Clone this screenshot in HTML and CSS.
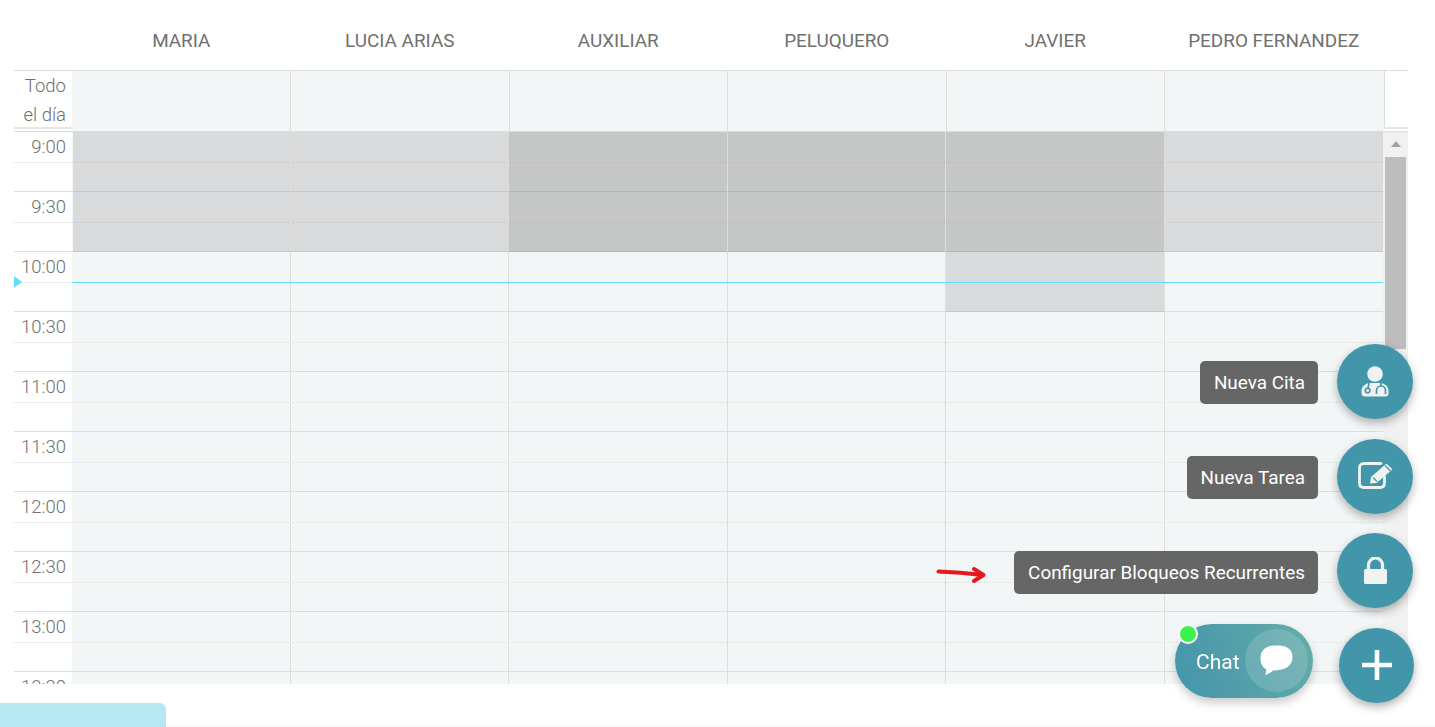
FILE: index.html
```html
<!DOCTYPE html>
<html lang="es">
<head>
<meta charset="utf-8">
<title>Agenda</title>
<link rel="stylesheet" href="styles.css">
</head>
<body>
<main class="calendar">
  <div class="head">
    <div class="axis-gap"></div>
    <div class="res">MARIA</div>
    <div class="res">LUCIA ARIAS</div>
    <div class="res">AUXILIAR</div>
    <div class="res">PELUQUERO</div>
    <div class="res">JAVIER</div>
    <div class="res">PEDRO FERNANDEZ</div>
  </div>
  <div class="allday">
    <div class="allday-axis">Todo<br>el día</div>
    <div class="allday-cell"></div>
    <div class="allday-cell"></div>
    <div class="allday-cell"></div>
    <div class="allday-cell"></div>
    <div class="allday-cell"></div>
    <div class="allday-cell allday-last"></div>
    <div class="allday-gutter"></div>
  </div>
  <div class="body">
    <div class="grid">
      <div class="slot major"><span class="time">9:00</span><span class="track"></span></div>
      <div class="slot minor"><span class="time"></span><span class="track"></span></div>
      <div class="slot major"><span class="time">9:30</span><span class="track"></span></div>
      <div class="slot minor"><span class="time"></span><span class="track"></span></div>
      <div class="slot major"><span class="time">10:00</span><span class="track"></span></div>
      <div class="slot minor"><span class="time"></span><span class="track"></span></div>
      <div class="slot major"><span class="time">10:30</span><span class="track"></span></div>
      <div class="slot minor"><span class="time"></span><span class="track"></span></div>
      <div class="slot major"><span class="time">11:00</span><span class="track"></span></div>
      <div class="slot minor"><span class="time"></span><span class="track"></span></div>
      <div class="slot major"><span class="time">11:30</span><span class="track"></span></div>
      <div class="slot minor"><span class="time"></span><span class="track"></span></div>
      <div class="slot major"><span class="time">12:00</span><span class="track"></span></div>
      <div class="slot minor"><span class="time"></span><span class="track"></span></div>
      <div class="slot major"><span class="time">12:30</span><span class="track"></span></div>
      <div class="slot minor"><span class="time"></span><span class="track"></span></div>
      <div class="slot major"><span class="time">13:00</span><span class="track"></span></div>
      <div class="slot minor"><span class="time"></span><span class="track"></span></div>
      <div class="slot major"><span class="time">13:30</span><span class="track"></span></div>
      <div class="lanes">
        <div class="lane"><div class="shade shade-light shade-morning"></div></div>
        <div class="lane"><div class="shade shade-light shade-morning"></div></div>
        <div class="lane"><div class="shade shade-dark shade-morning"></div></div>
        <div class="lane"><div class="shade shade-dark shade-morning"></div></div>
        <div class="lane"><div class="shade shade-dark shade-morning"></div><div class="shade shade-light shade-after"></div></div>
        <div class="lane"><div class="shade shade-light shade-morning"></div></div>
      </div>
      <div class="now-line"></div>
      <div class="now-mark"></div>
    </div>
    <div class="scrollbar">
      <div class="scroll-up"></div>
      <div class="scroll-thumb"></div>
    </div>
  </div>
</main>

<footer class="foot">
  <div class="foot-tab"></div>
  <div class="foot-strip"></div>
</footer>

<svg class="arrow" width="52" height="18" viewBox="0 0 52 18" aria-hidden="true">
  <path d="M2.500 5.500 C16 6 30 7 47 9" fill="none" stroke="#e5181f" stroke-width="4" stroke-linecap="round"/>
  <path d="M38 3 L47.500 9 L38 15" fill="none" stroke="#e5181f" stroke-width="4" stroke-linecap="round" stroke-linejoin="round"/>
</svg>

<aside class="actions">
  <div class="action">
    <span class="tip">Nueva Cita</span>
    <button class="fab" type="button" aria-label="Nueva Cita">
      <svg width="28" height="31" viewBox="0 0 28 31">
        <circle cx="14" cy="8" r="7.800" fill="#f0f2f2"/>
        <path d="M.5 25.500C.5 20.500 3 18.500 8 17L20 17C25 18.500 27.500 20.500 27.500 25.500V27Q27.500 30.500 24 30.500H4Q.5 30.500 .5 27Z" fill="#f0f2f2"/>
        <path d="M8 17 L7 22" stroke="#4296aa" stroke-width="1.600" fill="none"/>
        <circle cx="6.600" cy="24.500" r="2.300" fill="#f0f2f2" stroke="#4296aa" stroke-width="1.600"/>
        <path d="M20 17V20M15.500 28V24.500A4.500 4.500 0 0 1 24.500 24.500V28" stroke="#4296aa" stroke-width="1.700" fill="none"/>
      </svg>
    </button>
  </div>
  <div class="action">
    <span class="tip">Nueva Tarea</span>
    <button class="fab" type="button" aria-label="Nueva Tarea">
      <svg width="36" height="29" viewBox="-1 2 36 29">
        <path d="M23 3.500H6Q1.500 3.500 1.500 8V23Q1.500 27.500 6 27.500H22Q26.500 27.500 26.500 23V17" fill="none" stroke="#f0f2f2" stroke-width="2.800" stroke-linecap="round"/>
        <path d="M12 23.500L13 17L28.500 3.500L34.500 9.500L18.500 23Z" fill="#f0f2f2"/>
        <path d="M27 5.500L32.500 11" stroke="#4296aa" stroke-width="1.200"/>
        <path d="M15 17.500L19 21.500" stroke="#4296aa" stroke-width="1.200"/>
      </svg>
    </button>
  </div>
  <div class="action">
    <span class="tip">Configurar Bloqueos Recurrentes</span>
    <button class="fab" type="button" aria-label="Configurar Bloqueos Recurrentes">
      <svg width="23" height="28" viewBox="0 1 23 28">
        <path d="M4.500 14V9A7 7 0 0 1 18.500 9V14" fill="none" stroke="#f0f2f2" stroke-width="3.200"/>
        <rect x="0" y="13" width="23" height="15" rx="1.500" fill="#f0f2f2"/>
      </svg>
    </button>
  </div>
  <div class="action action-main">
    <div class="chat">
      <span class="chat-dot"></span>
      <span class="chat-label">Chat</span>
      <span class="chat-bubble">
        <svg width="33" height="31" viewBox="0 0 33 31">
          <path d="M14 0.500C24 0 32.500 2 32.500 12C32.500 21 26 25 13 25.500C11 27.500 8 29.500 5 30C6 28 6.500 26 6 24C2 22 .500 18 .500 13C.500 5 6 1 14 .500Z" fill="#fff"/>
        </svg>
      </span>
    </div>
    <button class="fab fab-add" type="button" aria-label="Añadir">
      <svg width="30" height="30" viewBox="0 0 30 30">
        <path d="M15 0V30M0 15H30" stroke="#fff" stroke-width="4.600"/>
      </svg>
    </button>
  </div>
</aside>
</body>
</html>
```
FILE: styles.css
```css
* { box-sizing: border-box; }

html, body {
  margin: 0;
  height: 727px;
  overflow: hidden;
  background: #fff;
  font-family: Roboto, "Liberation Sans", sans-serif;
}

.calendar {
  width: 1394px;
  margin-left: 14px;
}

.head {
  display: grid;
  grid-template-columns: 58px repeat(6, 1fr);
  height: 71px;
  padding: 30px 25px 0 0;
  border-bottom: 1px solid #ddd;
}

.res {
  font-size: 18.900px;
  font-weight: 400;
  line-height: 22px;
  text-align: center;
  color: #707070;
}

.allday {
  display: grid;
  grid-template-columns: 58px 219px 219px 218px 219px 218px 219px 24px;
  height: 60px;
}

.allday-axis {
  height: 58px;
  padding: 1px 6px 0 0;
  border-bottom: 2px solid #e6e6e6;
  text-align: right;
  font-size: 18.500px;
  font-weight: 300;
  line-height: 29px;
  color: #707070;
}

.allday-cell {
  background: #f3f6f7;
  border-right: 1px solid #ddd;
}

.allday-last { border-right: 0; }

.allday-gutter {
  height: 58px;
  border-left: 1px solid #ddd;
  border-bottom: 2px solid #e6e6e6;
}

.body {
  display: flex;
  height: 553px;
  overflow: hidden;
  border-top: 1px solid #ddd;
}

.grid {
  position: relative;
  flex: 1;
  min-width: 0;
}

.slot {
  display: flex;
  border-bottom: 1px solid #ddd;
}

.major {
  height: 31px;
  border-bottom: 1px dotted #d8d8d8;
}

.minor {
  height: 29px;
}

.time {
  width: 58px;
  padding: 1px 6px 0 0;
  text-align: right;
  font-size: 18.500px;
  font-weight: 300;
  line-height: 29px;
  color: #707070;
  background: #fff;
}

.track {
  flex: 1;
  background: #f3f6f7;
}

.lanes {
  position: absolute;
  top: 0;
  bottom: 0;
  left: 58px;
  right: 0;
  display: grid;
  grid-template-columns: repeat(6, 1fr);
}

.lane {
  position: relative;
  border-right: 1px solid #ddd;
}

.lane:last-child { border-right: 0; }

.shade {
  position: absolute;
  left: 0;
  right: 0;
}

.lane:first-child .shade { left: 1px; }

.shade-light { background: rgba(113, 110, 116, .2); }
.shade-dark { background: rgba(90, 88, 86, .3); }
.shade-morning { top: 0; height: 120px; }
.shade-after { top: 120px; height: 60px; }

.now-line {
  position: absolute;
  top: 150px;
  left: 58px;
  right: 0;
  height: 1px;
  background: #62e0fb;
}

.now-mark {
  position: absolute;
  top: 144px;
  left: 0;
  border-style: solid;
  border-width: 6px 0 6px 8px;
  border-color: transparent transparent transparent #62e0fb;
}

.scrollbar {
  flex: none;
  width: 25px;
  padding: 9px 2px 0 2px;
  background: #f1f1f1;
}

.scroll-up {
  width: 0;
  margin: 0 auto 10px;
  border-style: solid;
  border-width: 0 5.500px 6px;
  border-color: transparent transparent #a3a3a3;
}

.scroll-thumb {
  width: 21px;
  height: 192px;
  background: #bdbdbd;
}

.foot {
  display: flex;
  align-items: flex-end;
  height: 24px;
  margin-top: 19px;
}

.foot-tab {
  width: 166px;
  height: 24px;
  background: #b5e8f3;
  border-top-right-radius: 6px;
}

.foot-strip {
  flex: 1;
  height: 2px;
  background: #f8f8f8;
}

.arrow {
  position: fixed;
  top: 566px;
  left: 936px;
}

.actions {
  position: fixed;
  top: 344px;
  right: 22px;
  display: flex;
  flex-direction: column;
  align-items: flex-end;
  gap: 19.600px;
}

.action {
  display: flex;
  align-items: center;
  gap: 19px;
}

.tip {
  display: block;
  height: 43px;
  margin-top: 2.800px;
  padding: 0 13px 0 14px;
  border-radius: 5px;
  background: #666;
  color: #fff;
  font-size: 18.900px;
  line-height: 44px;
  white-space: nowrap;
}

.fab {
  display: flex;
  align-items: center;
  justify-content: center;
  width: 76px;
  height: 75px;
  padding: 0;
  border: 0;
  border-radius: 50%;
  background: #4296aa;
  box-shadow: 0 4px 10px rgba(0, 0, 0, .3);
}

.action-main {
  gap: 26px;
  margin-right: -1px;
}

.fab-add {
  width: 75px;
}

.chat {
  position: relative;
  display: flex;
  align-items: center;
  justify-content: space-between;
  width: 138px;
  height: 74px;
  margin-top: -9px;
  padding: 0 5px 0 21px;
  border-radius: 37px;
  background: linear-gradient(70deg, #4495ab 0%, #57a2aa 60%, #66aca9 100%);
  box-shadow: 0 5px 10px rgba(0, 0, 0, .2);
}

.chat-dot {
  position: absolute;
  top: 0;
  left: 3px;
  width: 20px;
  height: 20px;
  border: 2px solid #fff;
  border-radius: 50%;
  background: #3cf24d;
}

.chat-label {
  padding-top: 2px;
  font-size: 21px;
  font-weight: 400;
  color: #fff;
}

.chat-bubble {
  display: flex;
  align-items: center;
  justify-content: center;
  width: 63px;
  height: 63px;
  border-radius: 50%;
  background: rgba(255, 255, 255, .14);
}
```
